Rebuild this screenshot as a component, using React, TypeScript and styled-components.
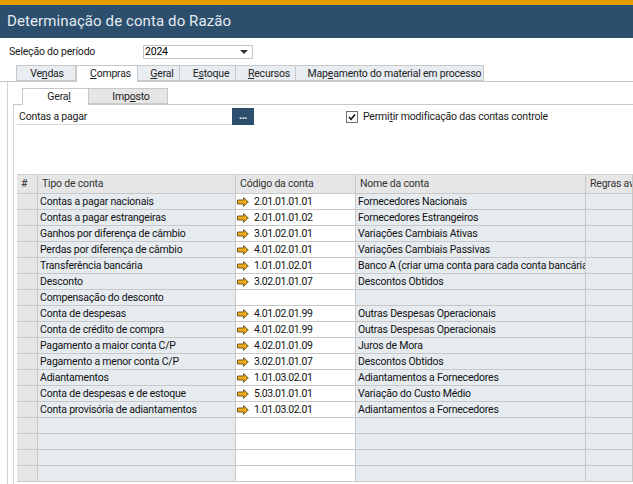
import React from "react";
import styled, { createGlobalStyle } from "styled-components";

const Global = createGlobalStyle`
  html, body { margin: 0; padding: 0; background: #fff; }
  body { font-family: Roboto, "Noto Sans", sans-serif; font-size: 10.5px; letter-spacing: -0.2px; color: #1a1a1a; }
`;

const Page = styled.div`
  width: 633px;
  height: 484px;
  overflow: hidden;
  display: flex;
  flex-direction: column;
`;

const Header = styled.div`
  height: 33px;
  flex: none;
  border-top: 5px solid #e09e00;
  background: #2c4f6e;
  color: #e4ebf0;
  font-size: 15px;
  letter-spacing: 0.1px;
  line-height: 33px;
  padding-left: 7px;
`;

const PeriodRow = styled.div`
  height: 27px;
  flex: none;
  display: flex;
  align-items: center;
  padding-left: 9px;
`;

const PeriodLabel = styled.span`
  width: 134px;
`;

const Select = styled.div`
  width: 110px;
  height: 14px;
  box-sizing: border-box;
  border: 1px solid #c4c4c4;
  display: flex;
  align-items: center;
  justify-content: space-between;
  padding: 0 4px 0 1px;
  color: #000;
`;

const Caret = styled.span`
  width: 0;
  height: 0;
  border-left: 4px solid transparent;
  border-right: 4px solid transparent;
  border-top: 4px solid #333;
`;

const TabStrip = styled.div<{ $indent: number }>`
  display: flex;
  flex: none;
  height: 16px;
  padding-left: ${(p) => p.$indent}px;
  border-bottom: 1px solid #c8c8c8;
`;

const Tab = styled.div<{ $w: number; $shift?: number; $active?: boolean; $gray?: boolean }>`
  width: ${(p) => p.$w}px;
  height: ${(p) => (p.$active ? 17 : 16)}px;
  box-sizing: border-box;
  flex: none;
  border: 1px solid #c8c8c8;
  border-left-width: ${(p) => (p.$active ? 1 : 0)}px;
  border-bottom-width: ${(p) => (p.$active ? 0 : 1)}px;
  background: ${(p) => (p.$active ? "#fff" : p.$gray ? "#e6e6e6" : "#e8edf1")};
  padding-left: ${(p) => p.$shift ?? 7}px;
  text-align: center;
  line-height: 15px;
  white-space: nowrap;
  color: #222;
  &:first-child { border-left-width: 1px; }
  u { text-underline-offset: 1px; }
`;

const OuterPanel = styled.div`
  flex: 1;
  min-height: 0;
  margin-left: 7px;
  padding: 6px 0 0 5px;
  border-left: 1px solid #d4d4d4;
  display: flex;
  flex-direction: column;
`;

const InnerPanel = styled.div`
  flex: 1;
  min-height: 0;
  border-left: 1px solid #d4d4d4;
  display: flex;
  flex-direction: column;
  padding: 3px 0 0 3px;
`;

const AccountRow = styled.div`
  height: 17px;
  flex: none;
  display: flex;
  align-items: center;
`;

const AccountField = styled.div`
  width: 215px;
  height: 16px;
  box-sizing: border-box;
  border-bottom: 1px solid #d8d8d8;
  padding-left: 2px;
  line-height: 15px;
`;

const DotsButton = styled.div`
  width: 22px;
  height: 17px;
  background: #2c4f6e;
  color: #fff;
  font-weight: 700;
  font-size: 10px;
  line-height: 16px;
  text-align: center;
`;

const CheckWrap = styled.label`
  margin-left: 92px;
  display: flex;
  align-items: center;
  gap: 5px;
`;

const CheckBox = styled.span`
  width: 10px;
  height: 10px;
  border: 1px solid #707070;
  display: flex;
  align-items: center;
  justify-content: center;
`;

const Grid = styled.div`
  margin-top: 49px;
  width: 616px;
  flex: none;
  display: flex;
  flex-direction: column;
  border-top: 1px solid #d0d0d0;
`;

const GridRow = styled.div<{ $head?: boolean }>`
  display: grid;
  grid-template-columns: 21px 198px 120px 230px 47px;
  height: ${(p) => (p.$head ? 19 : 16)}px;
  box-sizing: border-box;
  border-bottom: 1px solid #c8c8c8;
`;

const Cell = styled.div<{ $kind: "head" | "num" | "label" | "code" }>`
  box-sizing: border-box;
  border-right: 1px solid #c8c8c8;
  background: ${(p) =>
    p.$kind === "head" || p.$kind === "num" ? "#e6e6e6" : p.$kind === "label" ? "#e6ebf0" : "#fff"};
  display: flex;
  align-items: center;
  gap: 5px;
  padding-left: ${(p) => (p.$kind === "head" ? 4 : p.$kind === "code" ? 1 : 2)}px;
  padding-bottom: ${(p) => (p.$kind === "head" ? 2 : 0)}px;
  letter-spacing: ${(p) => (p.$kind === "code" ? "-0.45px" : "inherit")};
  white-space: nowrap;
  overflow: hidden;
  color: ${(p) => (p.$kind === "head" ? "#333" : "#111")};
  min-width: 0;
`;

const Arrow = () => (
  <svg width="12" height="10" viewBox="0 0 12 10" style={{ flex: "none" }}>
    <path d="M0.5 3 H6.5 V0.7 L11.3 5 L6.5 9.3 V7 H0.5 Z" fill="#f0a818" stroke="#6a5a30" strokeWidth="1" />
  </svg>
);

const rows: [string, string, string][] = [
  ["Contas a pagar nacionais", "2.01.01.01.01", "Fornecedores Nacionais"],
  ["Contas a pagar estrangeiras", "2.01.01.01.02", "Fornecedores Estrangeiros"],
  ["Ganhos por diferença de câmbio", "3.01.02.01.01", "Variações Cambiais Ativas"],
  ["Perdas por diferença de câmbio", "4.01.02.01.01", "Variações Cambiais Passivas"],
  ["Transferência bancária", "1.01.01.02.01", "Banco A (criar uma conta para cada conta bancária)"],
  ["Desconto", "3.02.01.01.07", "Descontos Obtidos"],
  ["Compensação do desconto", "", ""],
  ["Conta de despesas", "4.01.02.01.99", "Outras Despesas Operacionais"],
  ["Conta de crédito de compra", "4.01.02.01.99", "Outras Despesas Operacionais"],
  ["Pagamento a maior conta C/P", "4.02.01.01.09", "Juros de Mora"],
  ["Pagamento a menor conta C/P", "3.02.01.01.07", "Descontos Obtidos"],
  ["Adiantamentos", "1.01.03.02.01", "Adiantamentos a Fornecedores"],
  ["Conta de despesas e de estoque", "5.03.01.01.01", "Variação do Custo Médio"],
  ["Conta provisória de adiantamentos", "1.01.03.02.01", "Adiantamentos a Fornecedores"],
  ["", "", ""],
  ["", "", ""],
  ["", "", ""],
  ["", "", ""],
];

export default function App() {
  return (
    <Page>
      <Global />
      <Header>Determinação de conta do Razão</Header>
      <PeriodRow>
        <PeriodLabel>Seleção do período</PeriodLabel>
        <Select>
          2024
          <Caret />
        </Select>
      </PeriodRow>
      <TabStrip $indent={16}>
        <Tab $w={60} $shift={2}>Ve<u>n</u>das</Tab>
        <Tab $w={62} $active>
          <u>C</u>ompras
        </Tab>
        <Tab $w={42}>
          <u>G</u>eral
        </Tab>
        <Tab $w={56}>
          E<u>s</u>toque
        </Tab>
        <Tab $w={60}>
          <u>R</u>ecursos
        </Tab>
        <Tab $w={188} $shift={10}>
          Map<u>e</u>amento do material em processo
        </Tab>
      </TabStrip>
      <OuterPanel>
        <TabStrip $indent={9}>
          <Tab $w={67} $active>
            Gera<u>l</u>
          </Tab>
          <Tab $w={79} $gray $shift={6}>
            Imp<u>o</u>sto
          </Tab>
        </TabStrip>
        <InnerPanel>
          <AccountRow>
            <AccountField>Contas a pagar</AccountField>
            <DotsButton>...</DotsButton>
            <CheckWrap>
              <CheckBox>
                <svg width="8" height="8" viewBox="0 0 8 8">
                  <path d="M1 4 L3 6.2 L7 1.5" fill="none" stroke="#111" strokeWidth="1.6" />
                </svg>
              </CheckBox>
              <span>
                Permi<u>t</u>ir modificação das contas controle
              </span>
            </CheckWrap>
          </AccountRow>
          <Grid>
            <GridRow $head>
              <Cell $kind="head">#</Cell>
              <Cell $kind="head">Tipo de conta</Cell>
              <Cell $kind="head">Código da conta</Cell>
              <Cell $kind="head">Nome da conta</Cell>
              <Cell $kind="head">Regras avançadas</Cell>
            </GridRow>
            {rows.map(([label, code, name], i) => (
              <GridRow key={i}>
                <Cell $kind="num" />
                <Cell $kind="label">{label}</Cell>
                <Cell $kind="code">
                  {code && <Arrow />}
                  {code}
                </Cell>
                <Cell $kind="label">{name}</Cell>
                <Cell $kind="label" />
              </GridRow>
            ))}
          </Grid>
        </InnerPanel>
      </OuterPanel>
    </Page>
  );
}
